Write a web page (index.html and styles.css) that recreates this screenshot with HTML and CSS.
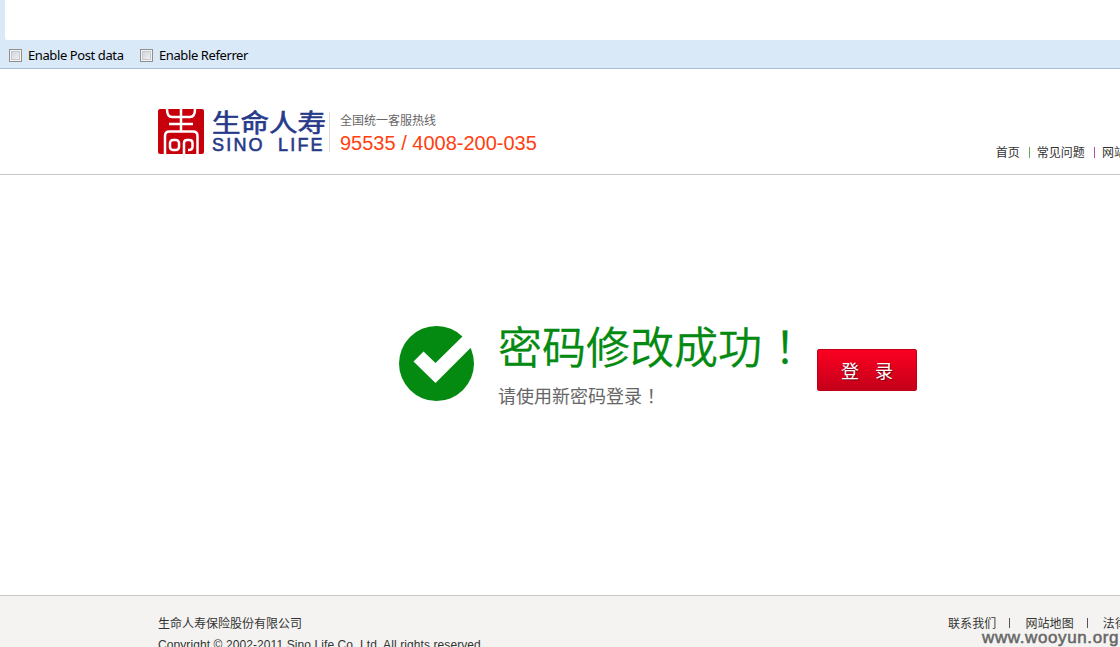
FILE: index.html
```html
<!DOCTYPE html>
<html lang="zh-CN">
<head>
    <meta charset="UTF-8">
    <title>生命人寿</title>
    <link rel="stylesheet" href="styles.css">
</head>
<body>

    <div class="toolbar">
        <div class="post-box"></div>
        <div class="options">
            <label><input type="checkbox"><span>Enable Post data</span></label>
            <label><input type="checkbox"><span>Enable Referrer</span></label>
        </div>
    </div>

    <div class="header">
        <div class="brand">
            <svg class="seal" width="46" height="45" viewBox="0 0 46 45">
                <rect width="46" height="45" rx="2" fill="#c7000b"/>
                <g fill="none" stroke="#fff" stroke-width="2.5">
                    <path d="M9 0Q9 8 14 8H32Q37 8 37 0M23 0V23M11 15H35M7 45V27Q7 22.500 11.500 22.500H35Q39.500 22.500 39.500 27V45"/>
                    <rect x="12" y="31" width="9" height="10" rx="3"/>
                    <path d="M26 45V34Q26 31 29 31H31.500Q34.500 31 34.500 34V38Q34.500 41 30 41"/>
                </g>
            </svg>
            <div class="brand-name">
                <div class="brand-cn">生命人寿</div>
                <div class="brand-en">SINO LIFE</div>
            </div>
        </div>
        <div class="hotline">
            <div class="hotline-label">全国统一客服热线</div>
            <div class="hotline-number">95535 / 4008-200-035</div>
        </div>
        <div class="nav">
            <a>首页</a><i></i><a>常见问题</a><i class="purple"></i><a>网站地图</a>
        </div>
    </div>

    <div class="main">
        <svg class="tick" width="75" height="75" viewBox="0 0 75 75">
            <circle cx="37.5" cy="37.5" r="37.5" fill="#048a10"/>
            <path d="M14.500 35.500L24.500 25.500L36.500 37L66 8L75 18.500L36.500 57Z" fill="#fff"/>
        </svg>
        <div class="message">
            <h1>密码修改成功<span class="mark">！</span></h1>
            <p>请使用新密码登录<span class="mark">！</span></p>
        </div>
        <button class="login">登 录</button>
    </div>

    <div class="footer">
        <div class="company">
            <div>生命人寿保险股份有限公司</div>
            <div class="copyright">Copyright © 2002-2011 Sino Life Co.,Ltd. All rights reserved.</div>
        </div>
        <div class="links">
            <a>联系我们</a><i></i><a>网站地图</a><i></i><a>法律声明</a>
        </div>
    </div>

    <div class="watermark">www.wooyun.org</div>

</body>
</html>
```

FILE: styles.css
```css
body { margin: 0; height: 647px; overflow: hidden; position: relative; background: #fff; font-family: "Liberation Sans", "Noto Sans CJK SC", sans-serif; font-size: 12px; color: #333; white-space: nowrap; display: flex; flex-direction: column; }

.toolbar { height: 68px; flex: none; background: #dae9f8; border-bottom: 1px solid #a9bfd8; }
.post-box { height: 40px; margin-left: 5px; background: #fff; border-bottom-left-radius: 2px; }
.options { display: flex; gap: 16px; padding-left: 9px; height: 28px; align-items: center; padding-top: 2px; box-sizing: border-box; font: 13px "Noto Sans", sans-serif; letter-spacing: -0.4px; color: #000; }
.options label { display: flex; align-items: center; }
.options span { display: block; width: 96px; }
.options input { appearance: none; width: 13px; height: 13px; margin: 0 6px 0 0; border: 1px solid #8e8f8f; background: linear-gradient(135deg, #cbcfd5, #f6f6f6); box-shadow: inset 0 0 0 1px #f4f4f4, inset 0 0 0 2px #c5cad0; }

.header { height: 105px; flex: none; border-bottom: 1px solid #c8c8c8; padding-left: 158px; display: flex; }
.brand { display: flex; padding-top: 40px; width: 171px; flex: none; }
.seal { flex: none; }
.brand-name { margin-left: 8px; color: #273a8a; }
.brand-cn { font-size: 28.5px; line-height: 28px; font-weight: 400; transform: scaleY(.86); -webkit-text-stroke: 0.7px #273a8a; }
.brand-en { font-size: 18px; line-height: 16px; font-weight: 400; letter-spacing: 2.2px; word-spacing: 6px; -webkit-text-stroke: 0.6px #273a8a; }
.hotline { height: 40px; margin-top: 43px; border-left: 1px solid #ddd; padding-left: 10px; }
.hotline-label { line-height: 18px; color: #666; }
.hotline-number { font-size: 20px; line-height: 26px; color: #ff4010; }
.nav { display: flex; margin-left: 459px; margin-top: 76px; line-height: 16px; }
.nav i { width: 1px; height: 11px; margin: 2px 7px 0 9px; background: #5fae50; }
.nav i.purple { background: #b050a8; }

.main { height: 420px; flex: none; display: flex; align-items: flex-start; padding-left: 399px; }
.tick { margin-top: 151px; flex: none; }
.message { width: 318px; margin-left: 24px; padding-top: 148px; }
h1 { margin: 0; font-size: 44px; line-height: 52px; font-weight: 350; color: #048a10; -webkit-text-stroke: 0.3px #048a10; }
p { margin: 10px 0 0; font-size: 18px; line-height: 24px; color: #666; }
.mark { padding-left: 0.27em; }
.login { margin: 174px 0 0 1px; width: 100px; height: 42px; padding: 0; border: 1px solid #c00018; border-radius: 2px; background: linear-gradient(#fb0020, #c4001a); color: #fff; font: 18px "Noto Sans CJK SC", sans-serif; word-spacing: 12px; text-shadow: 1px 1px 1px rgba(0,0,0,.5); }

.footer { flex: 1; background: #f4f3f1; border-top: 1px solid #c8c8c8; padding: 19px 0 0 158px; display: flex; }
.company { width: 790px; flex: none; line-height: 18px; }
.copyright { margin-top: 3px; letter-spacing: 0.09px; }
.links { display: flex; line-height: 18px; letter-spacing: 0.1px; }
.links i { width: 1px; height: 10px; margin: 3px 15px 0 13px; background: #555; }

.watermark { position: absolute; right: 1px; bottom: -1px; font-size: 17px; line-height: 20px; letter-spacing: 0.6px; color: #666; -webkit-text-stroke: 0.5px #666; }
```
